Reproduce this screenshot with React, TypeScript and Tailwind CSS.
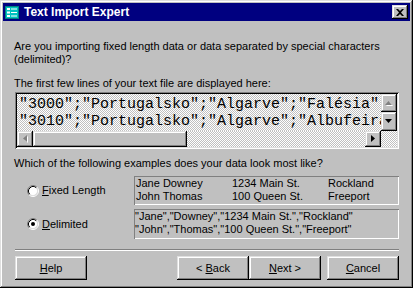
import React from "react";

const raised =
  "bg-[#c0c0c0] shadow-[inset_-1px_-1px_#000,inset_1px_1px_#dfdfdf,inset_-2px_-2px_#808080,inset_2px_2px_#fff]";

function Arrow({ dir, disabled }: { dir: "up" | "down" | "left" | "right"; disabled?: boolean }) {
  const pts: Record<string, string> = {
    up: "3.5,0 7,4 0,4",
    down: "0,0 7,0 3.5,4",
    left: "4,0 4,7 0,3.5",
    right: "0,0 4,3.5 0,7",
  };
  const vertical = dir === "up" || dir === "down";
  const w = vertical ? 7 : 4;
  const h = vertical ? 4 : 7;
  return (
    <svg width={w + 1} height={h + 1} viewBox={`0 0 ${w + 1} ${h + 1}`}>
      {disabled && <polygon points={pts[dir]} fill="#fff" transform="translate(1 1)" />}
      <polygon points={pts[dir]} fill={disabled ? "#808080" : "#000"} />
    </svg>
  );
}

function Radio({ checked }: { checked?: boolean }) {
  return (
    <svg width="12" height="12" viewBox="0 0 12 12" className="shrink-0">
      <circle cx="6" cy="6" r="4.5" fill="#fff" />
      <path d="M2.11 9.89 A5.5 5.5 0 0 1 9.89 2.11" fill="none" stroke="#808080" />
      <path d="M9.89 2.11 A5.5 5.5 0 0 1 2.11 9.89" fill="none" stroke="#fff" />
      <path d="M2.82 9.18 A4.5 4.5 0 0 1 9.18 2.82" fill="none" stroke="#000" />
      <path d="M9.18 2.82 A4.5 4.5 0 0 1 2.82 9.18" fill="none" stroke="#dfdfdf" />
      {checked && <circle cx="6" cy="6" r="2" fill="#000" />}
    </svg>
  );
}

function Btn({ children, className = "" }: { children: React.ReactNode; className?: string }) {
  return (
    <div className={`w-[72px] h-[24px] flex items-center justify-center ${raised} ${className}`}>
      <span>{children}</span>
    </div>
  );
}

const lines = [
  '"3000";"Portugalsko";"Algarve";"Falésia";"Hotel"',
  '"3010";"Portugalsko";"Algarve";"Albufeira";"Hotel"',
  '"1000";"Portugalsko";"Lisboa";"Lisboa";"Hotel"',
];

export default function App() {
  return (
    <div className="w-[413px] h-[288px] bg-[#c0c0c0] p-[3px] flex flex-col text-black text-[11px] leading-[13px] font-['Liberation_Sans',Arial,sans-serif] shadow-[inset_-1px_-1px_#000,inset_1px_1px_#dfdfdf,inset_-2px_-2px_#808080,inset_2px_2px_#fff]">
      {/* title bar */}
      <div className="h-[18px] bg-[#000080] flex items-center pl-[2px] pr-[2px]">
        <svg width="14" height="13" viewBox="0 0 14 13" className="shrink-0">
          <rect x="0" y="0" width="14" height="13" fill="#008080" />
          <rect x="1" y="1" width="12" height="11" fill="#00c0c0" />
          <rect x="2" y="2" width="3" height="2" fill="#fff" />
          <rect x="2" y="5.5" width="3" height="2" fill="#fff" />
          <rect x="2" y="9" width="3" height="2" fill="#fff" />
          <rect x="6" y="2.5" width="6" height="1" fill="#fff" />
          <rect x="6" y="6" width="6" height="1" fill="#fff" />
          <rect x="6" y="9.5" width="6" height="1" fill="#fff" />
        </svg>
        <span className="ml-[5px] text-white font-bold text-[12px] leading-[14px]">Text Import Expert</span>
        <div className={`ml-auto w-[16px] h-[14px] flex items-center justify-center ${raised}`}>
          <svg width="8" height="7" viewBox="0 0 8 7">
            <path d="M0 0h2l2 2 2-2h2L5 3.5 8 7H6L4 5 2 7H0l3-3.5z" fill="#000" />
          </svg>
        </div>
      </div>

      <div className="flex-1 flex flex-col pl-[12px] pr-[11px]">
        <p className="mt-[19px] -ml-px">
          Are you importing fixed length data or data separated by special characters
          <br />
          (delimited)?
        </p>
        <p className="mt-[11px] -ml-px">The first few lines of your text file are displayed here:</p>

        {/* preview */}
        <div className="mt-[2px] h-[57px] p-[2px] shadow-[inset_1px_1px_#808080,inset_-1px_-1px_#fff,inset_2px_2px_#000,inset_-2px_-2px_#dfdfdf]">
          <div className="h-full grid grid-cols-[1fr_16px] grid-rows-[1fr_16px] bg-[repeating-conic-gradient(#c0c0c0_0_25%,#ffffff_0_50%)] bg-[length:2px_2px]">
            <div className="col-start-1 row-start-1 row-span-2 overflow-hidden whitespace-nowrap pl-[2px] pt-[2px] font-['Liberation_Mono','Courier_New',monospace] text-[15px] leading-[17px]">
              {lines.map((l) => (
                <div key={l}>{l}</div>
              ))}
            </div>
            <div className="col-start-2 row-start-1 flex flex-col">
              <div className={`h-[18px] flex items-center justify-center ${raised}`}>
                <Arrow dir="up" disabled />
              </div>
              <div className={`flex-1 flex items-center justify-center ${raised}`}>
                <Arrow dir="down" />
              </div>
            </div>
            <div className="col-start-1 row-start-2 flex z-10">
              <div className={`w-[16px] flex items-center justify-center ${raised}`}>
                <Arrow dir="left" disabled />
              </div>
              <div className={`w-[154px] ${raised}`} />
              <div className="flex-1 bg-[repeating-conic-gradient(#c0c0c0_0_25%,#ffffff_0_50%)] bg-[length:2px_2px]" />
              <div className={`w-[16px] flex items-center justify-center ${raised}`}>
                <Arrow dir="right" />
              </div>
            </div>
          </div>
        </div>

        <p className="mt-[8px] -ml-px">Which of the following examples does your data look most like?</p>

        {/* options */}
        <div className="mt-[6px] flex items-center">
          <div className="w-[119px] flex items-center pl-[12px]">
            <Radio />
            <span className="ml-[3px]">
              <u>F</u>ixed Length
            </span>
          </div>
          <div className="flex-1 h-[29px] pl-[2px] pt-px shadow-[inset_1px_1px_#808080,inset_-1px_-1px_#fff]">
            <div className="grid grid-cols-[96px_96px_1fr]">
              <span>Jane Downey</span>
              <span>1234 Main St.</span>
              <span>Rockland</span>
              <span>John Thomas</span>
              <span>100 Queen St.</span>
              <span>Freeport</span>
            </div>
          </div>
        </div>
        <div className="mt-[4px] flex items-center">
          <div className="w-[119px] flex items-center pl-[12px]">
            <Radio checked />
            <span className="ml-[3px]">
              <u>D</u>elimited
            </span>
          </div>
          <div className="flex-1 h-[30px] pl-[1px] pt-px shadow-[inset_1px_1px_#808080,inset_-1px_-1px_#fff]">
            <div>"Jane","Downey","1234 Main St.","Rockland"</div>
            <div>"John","Thomas","100 Queen St.","Freeport"</div>
          </div>
        </div>

        <div className="mt-[10px] h-[2px] border-t border-t-[#808080] border-b border-b-white" />

        <div className="mt-[5px] flex">
          <Btn>
            <u>H</u>elp
          </Btn>
          <Btn className="ml-auto">
            &lt; <u>B</u>ack
          </Btn>
          <Btn>
            <u>N</u>ext &gt;
          </Btn>
          <Btn className="ml-[6px]">
            <u>C</u>ancel
          </Btn>
        </div>
      </div>
    </div>
  );
}
